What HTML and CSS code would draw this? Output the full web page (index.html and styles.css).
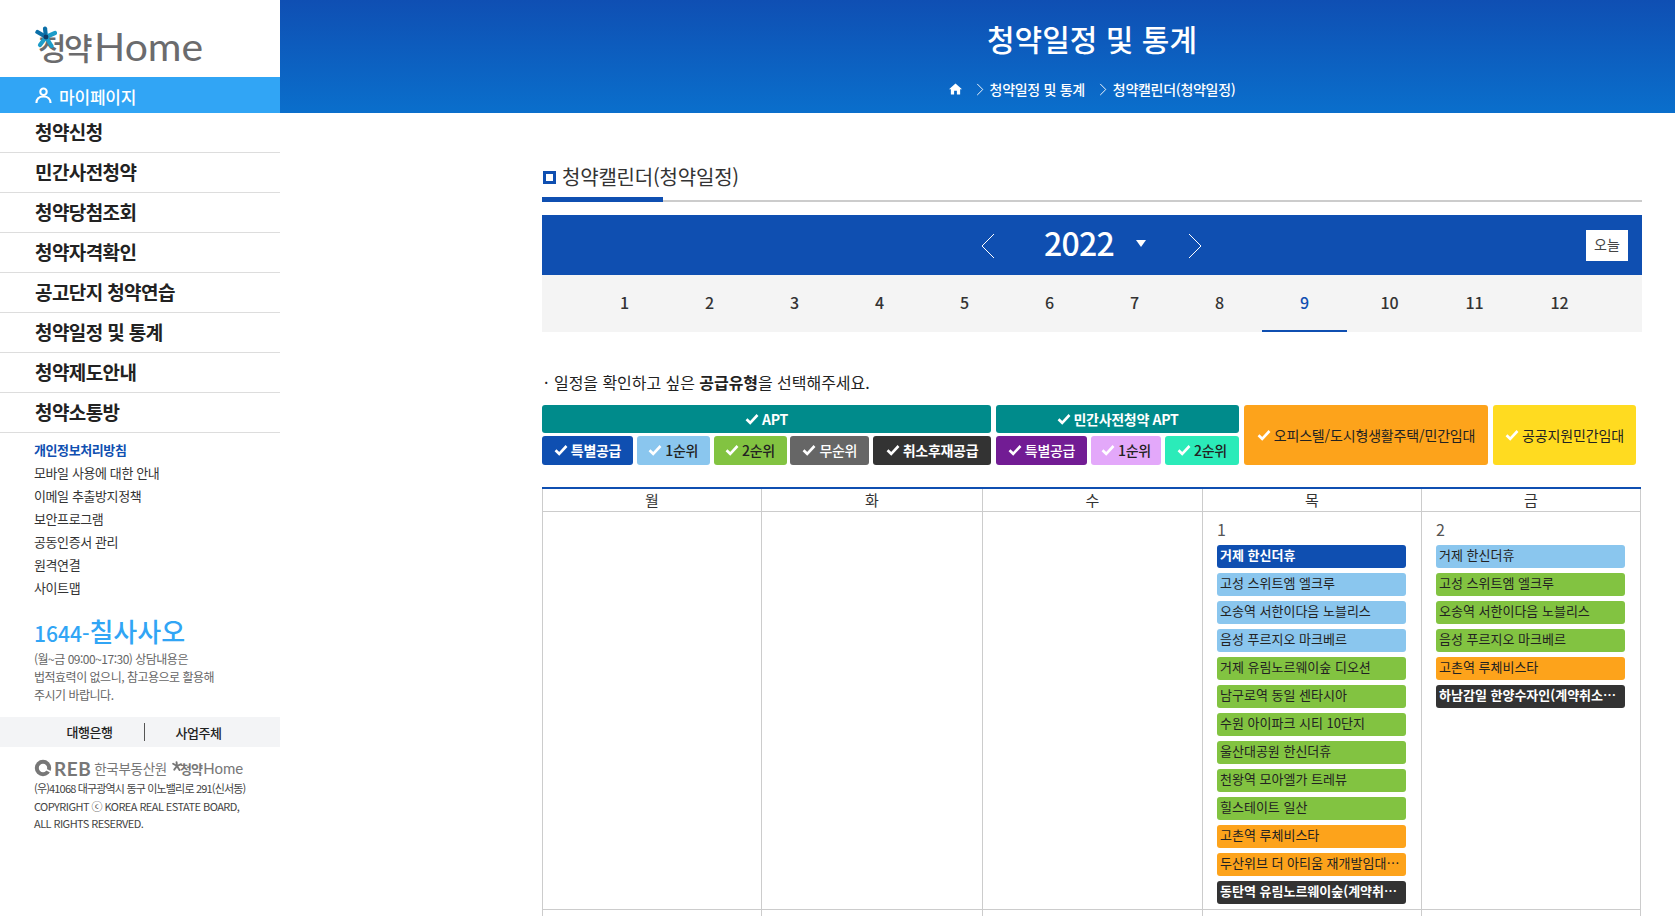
FILE: index.html
```html
<!DOCTYPE html>
<html lang="ko">
<head>
<meta charset="utf-8">
<title>청약일정 및 통계</title>
<link rel="stylesheet" href="styles.css">
</head>
<body>
<svg class="defs" width="0" height="0" aria-hidden="true">
  <symbol id="check" viewBox="0 0 14 12"><path d="M1.5 6.2 5.2 9.8 12.5 2" fill="none" stroke="currentColor" stroke-width="2.6"/></symbol>
  <symbol id="star" viewBox="0 0 22 22">
    <g stroke-linecap="round" stroke-width="4.2" fill="none">
      <path d="M11 11 10 2.5" stroke="#0b6fa8"/>
      <path d="M11 11 20 7" stroke="#1d9cc9"/>
      <path d="M11 11 16.5 20" stroke="#1d9cc9"/>
      <path d="M11 11 5 19" stroke="#1d9cc9"/>
      <path d="M11 11 2.5 6" stroke="#0b6fa8"/>
    </g>
    <circle cx="11" cy="11" r="2.4" fill="#123a66"/>
  </symbol>
  <symbol id="star-grey" viewBox="0 0 22 22">
    <g stroke-linecap="round" stroke-width="4.2" fill="none" stroke="#777">
      <path d="M11 11 10 2.5"/><path d="M11 11 20 7"/><path d="M11 11 16.5 20"/><path d="M11 11 5 19"/><path d="M11 11 2.5 6"/>
    </g>
  </symbol>
</svg>
<div class="page">
  <aside class="side">
    <div class="logo">
      <span class="logo-ko">청약</span><span class="logo-en">Home</span>
      <svg class="logo-star"><use href="#star"/></svg>
    </div>
    <a class="mypage">
      <svg class="person" viewBox="0 0 18 18"><circle cx="9" cy="5" r="3.4" fill="none" stroke="#fff" stroke-width="2.2"/><path d="M1.5 17c0-4.5 3-7 7.500-7s7.500 2.500 7.500 7" fill="none" stroke="#fff" stroke-width="2.2"/></svg>
      마이페이지
    </a>
    <ul class="menu">
      <li>청약신청</li>
      <li>민간사전청약</li>
      <li>청약당첨조회</li>
      <li>청약자격확인</li>
      <li>공고단지 청약연습</li>
      <li>청약일정 및 통계</li>
      <li>청약제도안내</li>
      <li>청약소통방</li>
    </ul>
    <ul class="links">
      <li class="strong">개인정보처리방침</li>
      <li>모바일 사용에 대한 안내</li>
      <li>이메일 추출방지정책</li>
      <li>보안프로그램</li>
      <li>공동인증서 관리</li>
      <li>원격연결</li>
      <li>사이트맵</li>
    </ul>
    <div class="tel"><span class="tel-num">1644-</span><span class="tel-ko">칠사사오</span></div>
    <p class="tel-desc">(월~금 09:00~17:30) 상담내용은<br>법적효력이 없으니, 참고용으로 활용해<br>주시기 바랍니다.</p>
    <div class="banks"><span class="bank">대행은행</span><span class="bank">사업주체</span></div>
    <div class="foot-logo">
      <svg class="reb-mark" viewBox="0 0 18 18"><circle cx="9" cy="9" r="6.200" fill="none" stroke="#777" stroke-width="4"/><path d="M9 9 17 13" stroke="#fff" stroke-width="1.500"/></svg>
      <span class="reb">REB</span>
      <span class="reb-name">한국부동산원</span>
      <svg class="foot-star"><use href="#star-grey"/></svg>
      <span class="foot-ko">청약</span><span class="foot-en">Home</span>
    </div>
    <p class="addr"><span class="addr-ko">(우)41068 대구광역시 동구 이노밸리로 291(신서동)</span><br>COPYRIGHT ⓒ KOREA REAL ESTATE BOARD,<br>ALL RIGHTS RESERVED.</p>
  </aside>

  <div class="main">
    <header class="top">
      <h1>청약일정 및 통계</h1>
      <nav class="crumb">
        <svg class="home" viewBox="0 0 14 12"><path d="M7 0 0 6.200h2V12h3.500V8h3v4H12V6.200h2z" fill="#fff"/></svg>
        <svg class="sep" viewBox="0 0 8 14"><path d="M1 1l6 6-6 6" fill="none" stroke="#fff"/></svg>
        <span class="crumb-a">청약일정 및 통계</span>
        <svg class="sep" viewBox="0 0 8 14"><path d="M1 1l6 6-6 6" fill="none" stroke="#fff"/></svg>
        <span>청약캘린더(청약일정)</span>
      </nav>
    </header>

    <section class="content">
      <h2 class="title"><i class="title-box"></i>청약캘린더(청약일정)</h2>

      <div class="yearbar">
        <svg class="arrow arrow-l" viewBox="0 0 14 26"><path d="M13 1 1 13l12 12" fill="none" stroke="#fff"/></svg>
        <span class="year">2022</span>
        <i class="caret"></i>
        <svg class="arrow arrow-r" viewBox="0 0 14 26"><path d="M1 1l12 12L1 25" fill="none" stroke="#fff"/></svg>
        <button class="today">오늘</button>
      </div>

      <ol class="months">
        <li>1</li><li>2</li><li>3</li><li>4</li><li>5</li><li>6</li><li>7</li><li>8</li>
        <li class="on">9</li><li>10</li><li>11</li><li>12</li>
      </ol>

      <p class="guide"><span class="dot">·</span>일정을 확인하고 싶은 <b>공급유형</b>을 선택해주세요.</p>

      <div class="filters">
        <div class="group g-apt">
          <div class="chip head teal"><svg class="ck"><use href="#check"/></svg>APT</div>
          <div class="subs">
            <div class="chip blue w91"><svg class="ck"><use href="#check"/></svg>특별공급</div>
            <div class="chip sky w73"><svg class="ck"><use href="#check"/></svg>1순위</div>
            <div class="chip green w73"><svg class="ck"><use href="#check"/></svg>2순위</div>
            <div class="chip grey w79"><svg class="ck"><use href="#check"/></svg>무순위</div>
            <div class="chip dark w118"><svg class="ck"><use href="#check"/></svg>취소후재공급</div>
          </div>
        </div>
        <div class="group g-pre">
          <div class="chip head teal"><svg class="ck"><use href="#check"/></svg>민간사전청약 APT</div>
          <div class="subs">
            <div class="chip purple w91"><svg class="ck"><use href="#check"/></svg>특별공급</div>
            <div class="chip pink w70"><svg class="ck"><use href="#check"/></svg>1순위</div>
            <div class="chip mint w74"><svg class="ck"><use href="#check"/></svg>2순위</div>
          </div>
        </div>
        <div class="chip tall orange w244"><svg class="ck"><use href="#check"/></svg>오피스텔/도시형생활주택/민간임대</div>
        <div class="chip tall yellow w143"><svg class="ck"><use href="#check"/></svg>공공지원민간임대</div>
      </div>

      <table class="cal">
        <thead>
          <tr><th>월</th><th>화</th><th>수</th><th>목</th><th>금</th></tr>
        </thead>
        <tbody>
          <tr>
            <td></td><td></td><td></td>
            <td>
              <div class="day">1</div>
              <div class="ev blue">거제 한신더휴</div>
              <div class="ev sky">고성 스위트엠 엘크루</div>
              <div class="ev sky">오송역 서한이다음 노블리스</div>
              <div class="ev sky">음성 푸르지오 마크베르</div>
              <div class="ev green">거제 유림노르웨이숲 디오션</div>
              <div class="ev green">남구로역 동일 센타시아</div>
              <div class="ev green">수원 아이파크 시티 10단지</div>
              <div class="ev green">울산대공원 한신더휴</div>
              <div class="ev green">천왕역 모아엘가 트레뷰</div>
              <div class="ev green">힐스테이트 일산</div>
              <div class="ev orange">고촌역 루체비스타</div>
              <div class="ev orange">두산위브 더 아티움 재개발임대…</div>
              <div class="ev dark">동탄역 유림노르웨이숲(계약취…</div>
            </td>
            <td>
              <div class="day">2</div>
              <div class="ev sky">거제 한신더휴</div>
              <div class="ev green">고성 스위트엠 엘크루</div>
              <div class="ev green">오송역 서한이다음 노블리스</div>
              <div class="ev green">음성 푸르지오 마크베르</div>
              <div class="ev orange">고촌역 루체비스타</div>
              <div class="ev dark">하남감일 한양수자인(계약취소…</div>
            </td>
          </tr>
          <tr class="next"><td></td><td></td><td></td><td></td><td></td></tr>
        </tbody>
      </table>
    </section>
  </div>
</div>
</body>
</html>
```
FILE: styles.css
```css
* { box-sizing: border-box; }
html, body { margin: 0; padding: 0; height: 916px; overflow: hidden; background: #fff; }
body { font-family: "Noto Sans CJK KR", "Noto Sans", sans-serif; color: #222; }
ul, ol { list-style: none; margin: 0; padding: 0; }
p, h1, h2 { margin: 0; }
.defs { position: absolute; }
.page { display: flex; width: 1675px; height: 916px; }

/* sidebar */
.side { width: 280px; flex: none; }
.logo { height: 77px; padding: 15px 0 0 38px; position: relative; display: flex; align-items: center; color: #6b6b6d; line-height: 1; }
.logo-star { position: absolute; left: 35px; top: 26px; width: 22px; height: 22px; }
.logo-ko { font-size: 31px; font-weight: 500; letter-spacing: -2.5px; flex: none; }
.logo-en { font-family: "Lato", sans-serif; font-weight: 400; font-size: 39px; margin-left: 4px; transform-origin: left center; transform: scaleX(1.05); }
.mypage { height: 36px; background: #31a5f5; color: #fff; display: flex; align-items: center; padding: 3px 0 0 35px; font-size: 17px; font-weight: 500; letter-spacing: -0.2px; gap: 7px; }
.person { width: 17px; height: 17px; margin-top: -3px; }
.menu li { height: 40px; border-bottom: 1px solid #ddd; padding-left: 35px; font-size: 19px; font-weight: 700; line-height: 37px; letter-spacing: -0.6px; color: #222; }
.links { padding: 5px 0 0 34px; font-size: 13px; line-height: 23px; letter-spacing: -0.4px; color: #333; }
.links .strong { color: #0f4fb1; font-weight: 700; }
.tel { padding: 14px 0 0 34px; color: #31a5f5; line-height: 36px; height: 50px; }
.tel-num { font-size: 21px; font-weight: 500; }
.tel-ko { font-size: 26px; font-weight: 500; }
.tel-desc { padding: 1px 0 0 34px; font-size: 12px; line-height: 18px; letter-spacing: -0.5px; color: #666; }
.banks { margin-top: 13px; height: 30px; background: #f3f4f6; display: flex; align-items: center; padding-left: 35px; font-size: 13px; font-weight: 500; letter-spacing: -0.4px; }
.bank { width: 110px; text-align: center; color: #222; }
.bank:first-child { border-right: 1px solid #555; line-height: 18px; }
.bank:last-child { width: 107px; }
.foot-logo { height: 30px; margin-top: 6px; padding-left: 34px; display: flex; align-items: center; color: #777; gap: 2px; position: relative; }
.reb-mark { width: 18px; height: 18px; flex: none; }
.reb { font-family: "Lato", sans-serif; font-weight: 700; font-size: 19px; letter-spacing: 0.5px; margin-right: 1px; }
.reb-name { font-size: 13.500px; letter-spacing: -0.3px; margin-right: 3px; }
.foot-star { width: 10px; height: 10px; margin-bottom: 5px; margin-right: -8px; flex: none; position: relative; }
.foot-ko { font-size: 13px; font-weight: 700; padding-left: 4px; letter-spacing: -0.8px; }
.foot-en { font-family: "Lato", sans-serif; font-size: 15px; margin-left: -1px; }
.addr { padding-left: 34px; font-size: 11px; line-height: 17.500px; letter-spacing: -0.55px; color: #444; margin-top: -3px; }
.addr-ko { letter-spacing: -0.83px; }

/* header */
.main { flex: 1; min-width: 0; }
.top { height: 113px; background: linear-gradient(180deg, #0f4fb3 0%, #0a6fcc 100%); color: #fff; padding: 0 33px 0 262px; display: flex; flex-direction: column; align-items: center; }
.top h1 { font-size: 30px; font-weight: 500; line-height: 38px; margin-top: 19px; letter-spacing: 0; }
.crumb { display: flex; align-items: center; margin-top: 18px; font-size: 14px; font-weight: 500; letter-spacing: -0.3px; line-height: 28px; }
.home { width: 13px; height: 12px; }
.sep { width: 8px; height: 13px; margin: 0 6px 0 14px; }
.crumb-a { margin-right: 0; }

/* content */
.content { padding: 0 33px 0 262px; }
.title { height: 89px; padding: 46px 0 0; font-size: 20px; font-weight: 400; line-height: 36px; display: flex; align-items: flex-start; border-bottom: 2px solid #ccc; position: relative; letter-spacing: -0.2px; color: #333; }
.title::after { content: ""; position: absolute; left: 0; bottom: -2px; width: 121px; height: 5px; background: #0f4fb1; }
.title-box { width: 13px; height: 13px; border: 3px solid #0f4fb1; margin: 12px 6px 0 1px; flex: none; }
.yearbar { margin-top: 13px; height: 60px; background: #0f4fb1; position: relative; display: flex; align-items: center; color: #fff; padding-left: 502px; }
.year { font-size: 32px; font-weight: 500; line-height: 54px; height: 60px; letter-spacing: -0.7px; }
.caret { width: 0; height: 0; border: 5.500px solid transparent; border-top: 7px solid #fff; border-bottom: 0; margin-left: 22px; margin-top: -3px; }
.arrow { position: absolute; width: 14px; height: 26px; top: 18px; }
.arrow-l { left: 439px; }
.arrow-r { left: 646px; }
.today { position: absolute; right: 14px; top: 15px; width: 42px; height: 31px; border: 0; background: #fff; color: #444; font: 400 14px/28px "Noto Sans CJK KR", sans-serif; padding: 0 0 3px; }
.months { height: 57px; background: #f4f4f4; display: flex; padding-left: 40px; }
.months li { width: 85px; text-align: center; font-size: 16px; font-weight: 500; line-height: 55px; color: #333; }
.months li.on { color: #0f4fb1; border-bottom: 2px solid #0f4fb1; }
.guide { margin-top: 36px; font-size: 16px; line-height: 28px; color: #222; height: 37px; letter-spacing: -0.05px; }
.guide b { font-weight: 700; }
.dot { display: inline-block; width: 12px; padding-left: 2px; }

.filters { display: flex; gap: 5px; height: 60px; }
.group { display: flex; flex-direction: column; gap: 3px; }
.g-apt { width: 449px; }
.g-pre { width: 243px; }
.subs { display: flex; justify-content: space-between; }
.chip { display: flex; align-items: center; justify-content: center; border-radius: 3px; font-size: 14px; font-weight: 500; letter-spacing: -0.3px; height: 29px; padding-bottom: 1px; white-space: nowrap; }
.chip.head { height: 28px; font-weight: 700; }
.chip.tall { height: 60px; font-weight: 400; letter-spacing: -0.15px; }
.ck { width: 14px; height: 12px; margin-right: 3px; color: #fff; flex: none; }
.w70 { width: 70px; } .w73 { width: 73px; } .w74 { width: 74px; } .w79 { width: 79px; } .w91 { width: 91px; } .w118 { width: 118px; } .w143 { width: 143px; } .w244 { width: 244px; }

.teal { background: #008b8b; color: #fff; }
.blue { background: #0f4fb1; color: #fff; font-weight: 700; }
.sky { background: #8ac6ee; color: #222; }
.green { background: #82c341; color: #222; }
.grey { background: #666; color: #fff; }
.dark { background: #333; color: #fff; font-weight: 700; }
.purple { background: #721c94; color: #fff; }
.pink { background: #e3a8fa; color: #222; }
.mint { background: #2bebb9; color: #222; }
.orange { background: #fda31b; color: #222; }
.yellow { background: #ffdb20; color: #222; }

.cal { margin-top: 22px; width: 1099px; border-collapse: collapse; table-layout: fixed; border-top: 2px solid #0f4fb1; }
.cal th, .cal td { border: 1px solid #ccc; }
.cal thead tr th { border-top: 0; }
.cal th { height: 23px; padding: 0; font-size: 15px; font-weight: 400; line-height: 21px; color: #333; width: 219px; }
.cal th:nth-child(2) { width: 221px; }
.cal th:nth-child(3) { width: 220px; }
.cal td { height: 397px; padding: 4px 0 0 14px; vertical-align: top; }
.cal .next td { height: 30px; }
.day { height: 29px; font-size: 16px; line-height: 26px; color: #555; }
.ev { height: 23px; margin-bottom: 5px; width: 189px; padding: 0 3px; border-radius: 3px; font-size: 13px; line-height: 20px; letter-spacing: 0; white-space: nowrap; overflow: hidden; }
```
